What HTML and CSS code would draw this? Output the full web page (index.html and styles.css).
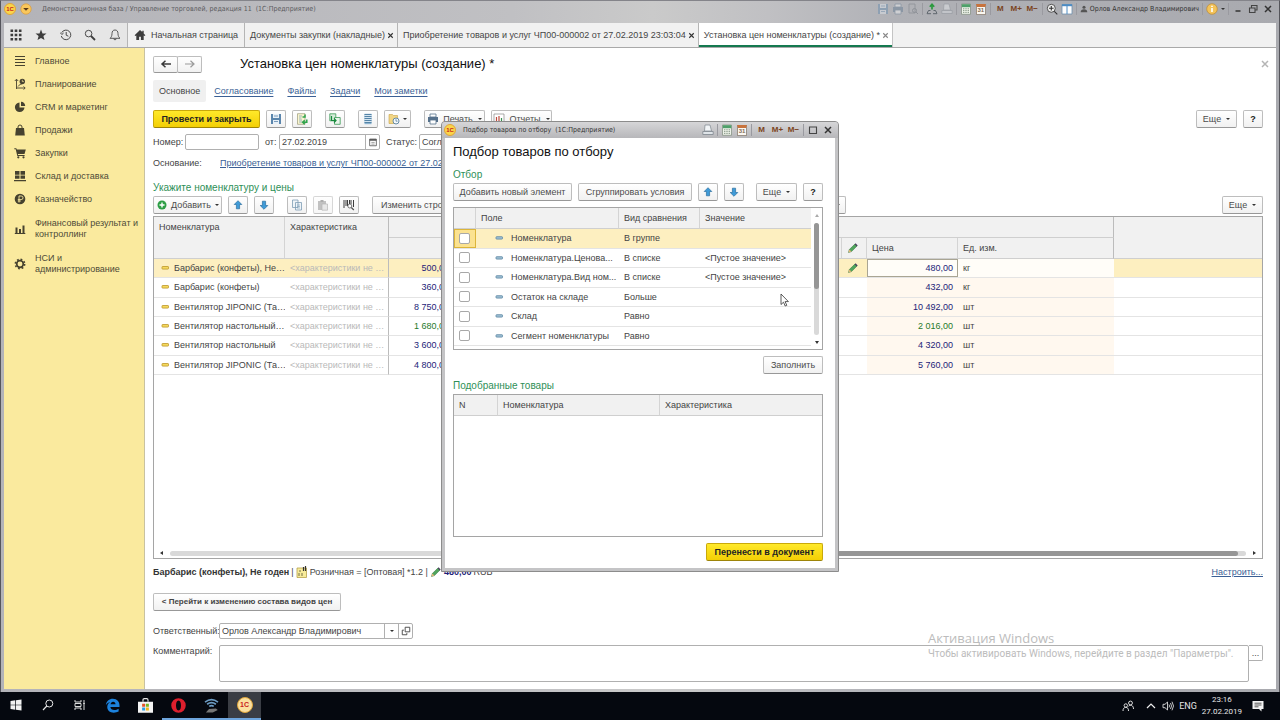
FILE: index.html
```html
<!DOCTYPE html>
<html lang="ru">
<head>
<meta charset="utf-8">
<title>Установка цен номенклатуры (создание)</title>
<link rel="stylesheet" href="styles.css">
</head>
<body>
<svg class="sprite" aria-hidden="true">
  <symbol id="drop" viewBox="0 0 12 12"><circle cx="6" cy="6" r="5.2" fill="#f9c75c" stroke="#d99a3c" stroke-width=".7"/><path d="M3.2 5h5.6L6 7.8z" fill="#5a3a18"/></symbol>
  <symbol id="apps" viewBox="0 0 12 12"><path d="M.5 .5h2.6v2.6H.5zM4.7 .5h2.6v2.6H4.7zM8.9 .5h2.6v2.6H8.9zM.5 4.7h2.6v2.6H.5zM4.7 4.7h2.6v2.6H4.7zM8.9 4.7h2.6v2.6H8.9zM.5 8.9h2.6v2.6H.5zM4.7 8.9h2.6v2.6H4.7zM8.9 8.9h2.6v2.6H8.9z" fill="#3d3d3d"/></symbol>
  <symbol id="star" viewBox="0 0 12 12"><path d="M6 .6l1.5 3.8 4 .2-3.1 2.5 1.1 4L6 8.9l-3.5 2.2 1.1-4L.5 4.6l4-.2z" fill="#3d3d3d"/></symbol>
  <symbol id="history" viewBox="0 0 12 12"><path d="M1.7 3.7A4.8 4.8 0 1 1 1.3 7M.2 3.6l1.6 1.9L3.6 4M6.2 3v3.2l2.2 1" fill="none" stroke="#4a4a4a" stroke-width="1"/></symbol>
  <symbol id="search" viewBox="0 0 12 12"><circle cx="4.6" cy="4.6" r="3.3" fill="none" stroke="#4a4a4a" stroke-width="1"/><path d="M7 7l4 4" stroke="#3d3d3d" stroke-width="1.8"/></symbol>
  <symbol id="bell" viewBox="0 0 12 12"><path d="M6 1c-2 0-3 1.400-3 3.600 0 2.500-.8 3.700-2 4.700h10c-1.200-1-2-2.200-2-4.700C9 2.400 8 1 6 1zM4.800 9.500a1.200 1.300 0 0 0 2.400 0" fill="none" stroke="#4a4a4a" stroke-width=".9"/></symbol>
  <symbol id="home" viewBox="0 0 12 12"><path d="M6 1L.6 6.200l.9.9L2.300 6.400V11h2.800V7.800h1.800V11h2.800V6.400l.8.700.9-.9-1.700-1.700V1.800H8.300v1.300z" fill="#3d3d3d"/></symbol>
  <symbol id="menu" viewBox="0 0 12 12"><path d="M1 1.500h10M1 4.500h10M1 7.500h10M1 10.500h10" stroke="#46422f" stroke-width="1.200"/></symbol>
  <symbol id="plan" viewBox="0 0 12 12"><path d="M2.500 11V1.500M.8 3l1.700-1.800L4.200 3M2.500 10h8.500M9.500 8.500L11.200 10 9.500 11.600M4 8.500L6.500 6l1 1" fill="none" stroke="#46422f" stroke-width=".9"/><circle cx="8.300" cy="3.500" r="2.700" fill="#46422f"/><path d="M8.300 1.800v1.800h1.600" fill="none" stroke="#faea9e" stroke-width=".7"/></symbol>
  <symbol id="pie" viewBox="0 0 12 12"><path d="M5.500 1.500v5h5A4.800 4.800 0 1 1 5.500 1.500z" fill="#46422f"/><path d="M7 .8A4.500 4.500 0 0 1 11.200 5H7z" fill="#46422f"/></symbol>
  <symbol id="bag" viewBox="0 0 12 12"><path d="M2 4h8l.8 7.500H1.200z" fill="#46422f"/><path d="M4 5.500V3a2 2 0 0 1 4 0v2.500" fill="none" stroke="#46422f" stroke-width="1"/></symbol>
  <symbol id="cart" viewBox="0 0 12 12"><path d="M.3 1.200h2l.5 1.300h9L10.500 7H3.800l.3 1h6.500v1H3.300L1.700 2.200H.3z" fill="#46422f"/><circle cx="4.300" cy="10.300" r="1.100" fill="#46422f"/><circle cx="9.500" cy="10.300" r="1.100" fill="#46422f"/></symbol>
  <symbol id="store" viewBox="0 0 12 12"><path d="M1 1h4.500v3.700H1zM6.500 1H11v3.700H6.500zM1 5.500h4.500v3.300H1zM6.500 5.500H11v3.300H6.500zM0 9.900h12v1.300H0z" fill="#46422f"/></symbol>
  <symbol id="ruble" viewBox="0 0 12 12"><circle cx="6" cy="6" r="5.300" fill="#46422f"/><path d="M5 9.500V3h2.200a1.600 1.600 0 0 1 0 3.600H3.800M3.800 8h3" fill="none" stroke="#faea9e" stroke-width=".9"/></symbol>
  <symbol id="bars" viewBox="0 0 12 12"><path d="M1.500 4.500h2V10h-2zM5 6h2v4H5zM8.500 2.500h2V10h-2zM.8 10h10.500v1H.8z" fill="#46422f"/></symbol>
  <symbol id="gear" viewBox="0 0 12 12"><circle cx="6" cy="6" r="3.300" fill="none" stroke="#46422f" stroke-width="1.700"/><circle cx="6" cy="6" r="4.700" fill="none" stroke="#46422f" stroke-width="1.500" stroke-dasharray="1.800 1.891"/></symbol>
  <symbol id="left" viewBox="0 0 12 12"><path d="M11 6H3M5.500 2.800L2 6l3.500 3.200" fill="none" stroke="#3b3b3b" stroke-width="1.500"/></symbol>
  <symbol id="right" viewBox="0 0 12 12"><path d="M1 6h8M6.500 2.800L10 6 6.500 9.200" fill="none" stroke="#9a9a9a" stroke-width="1.200"/></symbol>
  <symbol id="save" viewBox="0 0 12 12"><path d="M1 1h10v10H1z" fill="#5b86ad"/><path d="M3 1h6v4H3zM3 7h6v4H3z" fill="#e8f0f7"/><path d="M4 8.500h4M4 3h4" stroke="#5b86ad" stroke-width=".8"/></symbol>
  <symbol id="post" viewBox="0 0 12 12"><path d="M1.500 .7h7.500v10.600H1.500z" fill="#fbf6cf" stroke="#9a9a7a" stroke-width=".7"/><path d="M3 3h3M3 5h2.500M3 7h3M3 9h4" stroke="#7fa2b5" stroke-width=".8"/><path d="M10.800 6.500v2.700H7.500M9 1.500v2.500H6.500M8.700 7.200l-2 2 2 2" fill="none" stroke="#2fa54c" stroke-width="1.500"/></symbol>
  <symbol id="based" viewBox="0 0 12 12"><path d="M.8 .8h6v7h-6z" fill="#d4ecd8" stroke="#3b9b57" stroke-width=".8"/><path d="M5.500 4.500h5.700v6.800H5.500z" fill="#e9f5ea" stroke="#3b9b57" stroke-width=".8"/><path d="M2.500 3v4.500h4M5 5.500l2 2-2 2" fill="none" stroke="#17893c" stroke-width="1.200"/></symbol>
  <symbol id="list" viewBox="0 0 12 12"><path d="M2.500 .8h7v10.400h-7z" fill="#8db4d0"/><path d="M2.500 1.500h7M2.500 3.500h7M2.500 5.500h7M2.500 7.500h7M2.500 9.500h7" stroke="#4f7fa3" stroke-width=".9"/><path d="M2.500 2.500h7M2.500 4.500h7M2.500 6.500h7M2.500 8.500h7" stroke="#dcebf5" stroke-width=".9"/></symbol>
  <symbol id="clock" viewBox="0 0 12 12"><path d="M1 1.500h3.500l1 1H9.500v8H1z" fill="#f2d685" stroke="#c8a247" stroke-width=".6"/><circle cx="8" cy="8" r="3" fill="#f5f9fc" stroke="#56809f" stroke-width=".9"/><path d="M8 6.200V8.200h1.500" fill="none" stroke="#56809f" stroke-width=".8"/></symbol>
  <symbol id="print" viewBox="0 0 12 12"><path d="M3 1h6v3H3z" fill="#fff" stroke="#56718c" stroke-width=".8"/><path d="M1 4h10v5H1z" fill="#56718c"/><path d="M3 7h6v4H3z" fill="#fff" stroke="#56718c" stroke-width=".8"/></symbol>
  <symbol id="report" viewBox="0 0 12 12"><path d="M1 1h10v10H1z" fill="#fff" stroke="#888" stroke-width=".7"/><path d="M3.500 9V4M6 9V3" stroke="#bd4a3c" stroke-width="1.200"/><path d="M8.500 9V5" stroke="#38914f" stroke-width="1.200"/></symbol>
  <symbol id="plus" viewBox="0 0 12 12"><circle cx="6" cy="6" r="4.500" fill="#2e9e46"/><path d="M6 3.500v5M3.500 6h5" stroke="#fff" stroke-width="1.400"/></symbol>
  <symbol id="up" viewBox="0 0 12 12"><path d="M6 1.700l3.800 3.800H7.600v4.300H4.400V5.500H2.200z" fill="#3f9bd8" stroke="#2b6f9f" stroke-width=".7"/></symbol>
  <symbol id="down" viewBox="0 0 12 12"><path d="M6 10.300L2.200 6.500h2.200V2.200h3.200v4.300h2.200z" fill="#3f9bd8" stroke="#2b6f9f" stroke-width=".7"/></symbol>
  <symbol id="copy" viewBox="0 0 12 12"><path d="M1.500 1h5.500v7.500H1.500zM4.500 3.500h6v7.500h-6z" fill="#eef4f8" stroke="#7e9db5" stroke-width=".8"/><path d="M6 6h3M6 7.500h3M6 9h3" stroke="#7e9db5" stroke-width=".6"/></symbol>
  <symbol id="paste" viewBox="0 0 12 12"><path d="M1 2h8v9H1z" fill="#999"/><path d="M3.500 1h3v2h-3z" fill="#777"/><path d="M5 5h5.500v6.200H5z" fill="#d8d8d8" stroke="#888" stroke-width=".7"/></symbol>
  <symbol id="barcode" viewBox="0 0 12 12"><path d="M1 1v8M3 1v6M4.500 1v6M6.500 1v4M8 1v4M10.500 1v7" stroke="#3d3d3d" stroke-width="1"/><circle cx="6.800" cy="7" r="2" fill="#fff" stroke="#555" stroke-width=".8"/><path d="M8.300 8.500l2.500 2.500" stroke="#555" stroke-width="1.200"/></symbol>
  <symbol id="calendar" viewBox="0 0 12 12"><path d="M2 2.500h8v8H2z" fill="none" stroke="#555" stroke-width="1"/><path d="M2 2.500h8v2H2z" fill="#555"/><path d="M4 6.500h4M4 8.500h4" stroke="#777" stroke-width=".8"/></symbol>
  <symbol id="gold" viewBox="0 0 12 12"><rect x="3" y="4.500" width="6.500" height="2.600" rx=".6" fill="#f5d95e" stroke="#bd9628" stroke-width=".8"/></symbol>
  <symbol id="blue" viewBox="0 0 12 12"><rect x="3" y="4.700" width="6.500" height="2.400" rx=".6" fill="#9fc0d4" stroke="#5c87a3" stroke-width=".8"/></symbol>
  <symbol id="pencil" viewBox="0 0 12 12"><path d="M1.500 10.500l.8-3L8 2l2 2-5.500 5.600z" fill="#4fa55c" stroke="#2c6e38" stroke-width=".5"/><path d="M1.500 10.500l.8-3 2.200 2.100z" fill="#e5b777"/><path d="M7.600 2.300l1-1 2.100 2.100-1 1z" fill="#48405c"/></symbol>
  <symbol id="calc" viewBox="0 0 12 12"><path d="M1.500 1h9v10.300h-9z" fill="#eef3e9" stroke="#7e8b7c" stroke-width=".7"/><path d="M1.800 1.200h8.500v3H1.800z" fill="#4fa06a"/><path d="M3 5.800h6M3 7.600h6M3 9.400h6" stroke="#8a9a8a" stroke-width="1" stroke-dasharray="1.400 .9"/></symbol>
  <symbol id="preview" viewBox="0 0 12 12"><path d="M2 1h6v9H2z" fill="none" stroke="#5d656d" stroke-width=".8"/><circle cx="7.500" cy="7.500" r="2" fill="none" stroke="#5d656d"/><path d="M9 9l2 2" stroke="#5d656d"/></symbol>
  <symbol id="faded" viewBox="0 0 12 12"><path d="M3 1h5l1.500 6h-7z" fill="#f2f5f7" stroke="#7d858d" stroke-width=".7"/><path d="M.8 7.500h10.400v3H.8z" fill="#dfe4e8" stroke="#7d858d" stroke-width=".8"/></symbol>
  <symbol id="addlink" viewBox="0 0 12 12"><path d="M6 6.500V1.800M3.800 3.700L6 1.300l2.200 2.400" fill="none" stroke="#2c9a3f" stroke-width="1.700"/><path d="M1 10.500l1.500-3h2M11 10.500l-1.500-3h-2M1 10.700h4M7 10.700h4" fill="none" stroke="#5f676e" stroke-width="1"/></symbol>
  <symbol id="zoomin" viewBox="0 0 12 12"><circle cx="5.300" cy="5.300" r="4" fill="#eee" stroke="#444" stroke-width=".9"/><path d="M5.300 3v4.600M3 5.300h4.600M8.300 8.300l3 3" stroke="#333" stroke-width="1.100"/></symbol>
  <symbol id="panes" viewBox="0 0 12 12"><path d="M1 1.500h10v9.500H1z" fill="#fdfdfd" stroke="#6c8fae" stroke-width=".8"/><path d="M1 1.200h10v2H1z" fill="#4d8cc4"/><path d="M6 2v9" stroke="#4d8cc4"/></symbol>
  <symbol id="user" viewBox="0 0 12 12"><circle cx="6" cy="3.500" r="2.300" fill="#555"/><path d="M1 11c0-3 2-4.500 5-4.500s5 1.500 5 4.500z" fill="#555"/></symbol>
  <symbol id="info" viewBox="0 0 12 12"><circle cx="6" cy="6" r="5.300" fill="#f3c35a" stroke="#bd8a32" stroke-width=".7"/><path d="M6 5v4M6 2.700v1.300" stroke="#fff" stroke-width="1.600"/></symbol>
  <symbol id="min" viewBox="0 0 12 12"><path d="M3.500 8h5" stroke="#333" stroke-width="1.500"/></symbol>
  <symbol id="max" viewBox="0 0 12 12"><path d="M2.500 3h7v6.500h-7z" fill="none" stroke="#444" stroke-width="1.100"/></symbol>
  <symbol id="restore" viewBox="0 0 12 12"><path d="M2.500 5h5.500v4.500H2.500zM4.500 4.500V2.500h5.500V7H8.500" fill="none" stroke="#444" stroke-width="1.100"/></symbol>
  <symbol id="cross" viewBox="0 0 12 12"><path d="M3 3l6 6M9 3l-6 6" stroke="currentColor" stroke-width="1.500"/></symbol>
  <symbol id="open" viewBox="0 0 12 12"><path d="M5 1.500h5.500V7H5zM3.500 5H1.500v5.500H7V8.500" fill="none" stroke="#444" stroke-width="1.100"/></symbol>
  <symbol id="price" viewBox="0 0 12 12"><path d="M1 2h9.500v9.500H1z" fill="#f7eb9a" stroke="#b7a24a" stroke-width=".8"/><path d="M3 5h2M3 7v3M6 7v3" stroke="#777144" stroke-width="1"/><path d="M7.500 5V1M9.500 5V0" stroke="#333" stroke-width="1.200"/></symbol>
  <symbol id="win" viewBox="0 0 12 12"><path d="M.5 2l4.800-.7v4.400H.5zM6 1.200L11.500.4v5.300H6zM.5 6.300h4.800v4.400L.5 10zM6 6.300h5.500v5.300L6 10.800z" fill="#f2f2f2"/></symbol>
  <symbol id="find" viewBox="0 0 12 12"><circle cx="7.300" cy="4.500" r="3.500" fill="none" stroke="#e8e8e8" stroke-width="1"/><path d="M4.800 7L1 11" stroke="#e8e8e8" stroke-width="1.100"/></symbol>
  <symbol id="tasks" viewBox="0 0 12 12"><path d="M1 1v2h6V1M1 11V9h6v2M1 4.500h6v3H1zM10 1v10M9.200 4.500h1.600" fill="none" stroke="#dcdcdc" stroke-width="1"/></symbol>
  <symbol id="edge" viewBox="0 0 12 12"><path d="M.7 5.600C1 2.600 3.300.5 6.300.5c3.400 0 5.300 2.400 5.300 5.300v1.300H4.300c.1 1.600 1.400 2.400 3.100 2.400 1.300 0 2.500-.4 3.500-1v2.300c-1.100.6-2.400.9-3.900.9-3.100 0-5.200-1.700-5.200-4.500 0-1.700.9-3.200 2.400-4C2.700 3.600 1.500 4.300.7 5.600zM4.400 5h4c0-1.300-.7-2-1.900-2-1.100 0-1.800.7-2.100 2z" fill="#1c82dd"/></symbol>
  <symbol id="shop" viewBox="0 0 12 12"><path d="M0 3h12v8.800H0z" fill="#f4f4f4"/><path d="M4 3V1.500Q4 .5 5 .5h2q1 0 1 1V3" fill="none" stroke="#e8e8e8" stroke-width=".9"/><path d="M3.300 4.600h2.400V7H3.300z" fill="#e3532a"/><path d="M6.300 4.600h2.400V7H6.300z" fill="#78b421"/><path d="M3.300 7.600h2.400V10H3.300z" fill="#2a9de3"/><path d="M6.300 7.600h2.400V10H6.300z" fill="#f1b51c"/></symbol>
  <symbol id="opera" viewBox="0 0 12 12"><path fill-rule="evenodd" d="M6 .2a5.800 5.800 0 1 1 0 11.600A5.800 5.800 0 0 1 6 .2zM6 2C4.600 2 4 4 4 6s.6 4 2 4 2-2 2-4-.6-4-2-4z" fill="#dd1f2d"/></symbol>
  <symbol id="wifi" viewBox="0 0 12 12"><path d="M.8 3.300Q6-.8 11.200 3.300M2.500 5Q6 2.300 9.500 5M4.200 6.700Q6 5.400 7.800 6.700" fill="none" stroke="#6c9cc4" stroke-width="1.300"/><path d="M1.500 11.500L4 8.800l5.500-.5 1.500 1.200-4 2z" fill="#777"/></symbol>
  <symbol id="people" viewBox="0 0 12 12"><circle cx="8.500" cy="3" r="1.900" fill="none" stroke="#ddd"/><circle cx="3.800" cy="5.500" r="1.700" fill="none" stroke="#ddd"/><path d="M1 11c0-2.500 1-3.600 2.800-3.600S6.500 8.500 6.500 11M6.500 6.200c2-2 5-.8 5 2.800" fill="none" stroke="#ddd"/></symbol>
  <symbol id="chev" viewBox="0 0 12 12"><path d="M2 8l4-4 4 4" fill="none" stroke="#eee" stroke-width="1.200"/></symbol>
  <symbol id="sound" viewBox="0 0 12 12"><path d="M1 4.300h2L5.500 2v8L3 7.700H1zM7 4.500q1 1.500 0 3M8.500 3q2 3 0 6M10 1.700q3 4.300 0 8.600" fill="none" stroke="#ddd" stroke-width=".9"/></symbol>
  <symbol id="note" viewBox="0 0 12 12"><path d="M.5 1h11v8H9.500v2.500L7 9H.5z" fill="#f2f2f2"/><path d="M2.500 3.200h7M2.500 5h7M2.500 6.800h4" stroke="#333" stroke-width=".8"/></symbol>
</svg>

<div class="window">
  <header class="titlebar">
    <span class="logo">1С</span>
    <svg class="ic drop"><use href="#drop"/></svg>
    <span class="caption">Демонстрационная база / Управление торговлей, редакция 11&nbsp; (1С:Предприятие)</span>
    <div class="tools">
      <svg class="ic dim"><use href="#save"/></svg><svg class="ic dim"><use href="#print"/></svg><svg class="ic dim"><use href="#preview"/></svg>
      <i class="sep"></i><svg class="ic"><use href="#addlink"/></svg><svg class="ic dim"><use href="#faded"/></svg>
      <i class="sep"></i><svg class="ic"><use href="#calc"/></svg><span class="cal">31</span>
      <i class="sep"></i><b class="mem">M</b><b class="mem">M+</b><b class="mem">M−</b>
      <i class="sep"></i><svg class="ic"><use href="#zoomin"/></svg><svg class="ic"><use href="#panes"/></svg>
      <i class="sep"></i><span class="username"><svg class="ic small"><use href="#user"/></svg>Орлов Александр Владимирович</span>
      <i class="sep"></i><svg class="ic"><use href="#info"/></svg><i class="caret"></i>
      <i class="sep"></i><svg class="ic"><use href="#min"/></svg><svg class="ic"><use href="#restore"/></svg><svg class="ic dark"><use href="#cross"/></svg>
    </div>
  </header>

  <nav class="tabbar">
    <div class="quick">
      <svg class="ic"><use href="#apps"/></svg><svg class="ic"><use href="#star"/></svg><svg class="ic"><use href="#history"/></svg><svg class="ic"><use href="#search"/></svg><svg class="ic"><use href="#bell"/></svg>
    </div>
    <a class="tab home" href="#"><svg class="ic"><use href="#home"/></svg>Начальная страница</a>
    <a class="tab" href="#">Документы закупки (накладные)<svg class="ic x"><use href="#cross"/></svg></a>
    <a class="tab" href="#">Приобретение товаров и услуг ЧП00-000002 от 27.02.2019 23:03:04<svg class="ic x"><use href="#cross"/></svg></a>
    <a class="tab active" href="#">Установка цен номенклатуры (создание) *<svg class="ic x"><use href="#cross"/></svg></a>
  </nav>

  <div class="body">
    <aside class="sidebar">
      <a href="#"><svg class="ic"><use href="#menu"/></svg>Главное</a>
      <a href="#"><svg class="ic"><use href="#plan"/></svg>Планирование</a>
      <a href="#"><svg class="ic"><use href="#pie"/></svg>CRM и маркетинг</a>
      <a href="#"><svg class="ic"><use href="#bag"/></svg>Продажи</a>
      <a href="#"><svg class="ic"><use href="#cart"/></svg>Закупки</a>
      <a href="#"><svg class="ic"><use href="#store"/></svg>Склад и доставка</a>
      <a href="#"><svg class="ic"><use href="#ruble"/></svg>Казначейство</a>
      <a class="two" href="#"><svg class="ic"><use href="#bars"/></svg><span>Финансовый результат и<br>контроллинг</span></a>
      <a class="two" href="#"><svg class="ic"><use href="#gear"/></svg><span>НСИ и<br>администрирование</span></a>
    </aside>

    <main class="page">
      <div class="row head">
        <div class="pair"><button class="btn" aria-label="Назад"><svg class="ic"><use href="#left"/></svg></button><button class="btn" aria-label="Вперед"><svg class="ic"><use href="#right"/></svg></button></div>
        <h1>Установка цен номенклатуры (создание) *</h1>
        <svg class="ic pale push"><use href="#cross"/></svg>
      </div>
      <div class="row sections">
        <span class="current">Основное</span>
        <a href="#">Согласование</a><a href="#">Файлы</a><a href="#">Задачи</a><a href="#">Мои заметки</a>
      </div>
      <div class="row commands">
        <button class="btn primary">Провести и закрыть</button>
        <button class="btn sq" aria-label="Записать"><svg class="ic"><use href="#save"/></svg></button>
        <button class="btn sq" aria-label="Провести"><svg class="ic"><use href="#post"/></svg></button>
        <button class="btn sq gapl" aria-label="Создать на основании"><svg class="ic"><use href="#based"/></svg></button>
        <button class="btn sq gapl" aria-label="Список"><svg class="ic"><use href="#list"/></svg></button>
        <button class="btn wide" aria-label="Файлы"><svg class="ic"><use href="#clock"/></svg><i class="caret"></i></button>
        <button class="btn menu gapl"><svg class="ic"><use href="#print"/></svg>Печать<i class="caret"></i></button>
        <button class="btn menu"><svg class="ic"><use href="#report"/></svg>Отчеты<i class="caret"></i></button>
        <button class="btn more push">Еще<i class="caret"></i></button>
        <button class="btn sq help">?</button>
      </div>
      <div class="row fields">
        <label for="num">Номер:</label><input id="num" class="box num" type="text">
        <label for="date" class="from">от:</label>
        <span class="group"><input id="date" class="date" type="text" value="27.02.2019"><button class="mini" aria-label="Календарь"><svg class="ic"><use href="#calendar"/></svg></button></span>
        <label for="status" class="st">Статус:</label><select id="status" class="box status"><option>Согласован</option></select>
      </div>
      <div class="row basis"><span>Основание:</span><a href="#">Приобретение товаров и услуг ЧП00-000002 от 27.02.2019 23:03:04</a></div>
      <h2>Укажите номенклатуру и цены</h2>
      <div class="row commands list">
        <button class="btn add"><svg class="ic"><use href="#plus"/></svg>Добавить<i class="caret"></i></button>
        <button class="btn sq" aria-label="Вверх"><svg class="ic"><use href="#up"/></svg></button>
        <button class="btn sq" aria-label="Вниз"><svg class="ic"><use href="#down"/></svg></button>
        <button class="btn sq gapl" aria-label="Скопировать"><svg class="ic"><use href="#copy"/></svg></button>
        <button class="btn sq faint" aria-label="Вставить"><svg class="ic"><use href="#paste"/></svg></button>
        <button class="btn sq" aria-label="Штрихкод"><svg class="ic"><use href="#barcode"/></svg></button>
        <button class="btn change gapl">Изменить строки<i class="caret"></i></button>
        <button class="btn more push">Еще<i class="caret"></i></button>
      </div>

      <div class="grid">
        <table class="prices">
          <colgroup><col class="c1"><col class="c2"><col class="c3"><col class="c4"><col class="c5"><col class="c6"><col class="c7"><col></colgroup>
          <thead>
            <tr><th rowspan="2">Номенклатура</th><th rowspan="2" class="vline">Характеристика</th><th colspan="5" class="vline"></th><th rowspan="2"></th></tr>
            <tr><th></th><th></th><th class="mid"><svg class="ic"><use href="#pencil"/></svg></th><th>Цена</th><th class="vline">Ед. изм.</th></tr>
          </thead>
          <tbody>
            <tr class="sel"><td><svg class="ic"><use href="#gold"/></svg>Барбарис (конфеты), Не…</td><td class="ghost vline">&lt;характеристики не …</td><td class="n">500,00</td><td></td><td class="mid"><svg class="ic"><use href="#pencil"/></svg></td><td class="n edit">480,00</td><td class="unit">кг</td><td></td></tr>
            <tr><td><svg class="ic"><use href="#gold"/></svg>Барбарис (конфеты)</td><td class="ghost vline">&lt;характеристики не …</td><td class="n">360,00</td><td></td><td></td><td class="n warm">432,00</td><td class="warm">кг</td><td></td></tr>
            <tr><td><svg class="ic"><use href="#gold"/></svg>Вентилятор JIPONIC (Та…</td><td class="ghost vline">&lt;характеристики не …</td><td class="n">8 750,00</td><td></td><td></td><td class="n warm">10 492,00</td><td class="warm">шт</td><td></td></tr>
            <tr><td><svg class="ic"><use href="#gold"/></svg>Вентилятор настольный…</td><td class="ghost vline">&lt;характеристики не …</td><td class="n green">1 680,00</td><td></td><td></td><td class="n warm green">2 016,00</td><td class="warm">шт</td><td></td></tr>
            <tr><td><svg class="ic"><use href="#gold"/></svg>Вентилятор настольный</td><td class="ghost vline">&lt;характеристики не …</td><td class="n">3 600,00</td><td></td><td></td><td class="n warm">4 320,00</td><td class="warm">шт</td><td></td></tr>
            <tr><td><svg class="ic"><use href="#gold"/></svg>Вентилятор JIPONIC (Та…</td><td class="ghost vline">&lt;характеристики не …</td><td class="n">4 800,00</td><td></td><td></td><td class="n warm">5 760,00</td><td class="warm">шт</td><td></td></tr>
          </tbody>
        </table>
        <div class="hscroll"><i class="arrow l"></i><div class="track"><div class="thumb"></div></div><i class="arrow r"></i></div>
      </div>

      <div class="row info"><b>Барбарис (конфеты), Не годен</b> <span>|</span> <svg class="ic"><use href="#price"/></svg> <span>Розничная = [Оптовая] *1.2 |</span> <svg class="ic"><use href="#pencil"/></svg><b class="sum">480,00</b> <span>RUB</span><a class="push" href="#">Настроить...</a></div>
      <div class="row"><button class="btn goto">&lt; Перейти к изменению состава видов цен</button></div>
      <div class="row person"><label for="resp">Ответственный:</label><span class="group"><input id="resp" class="resp" type="text" value="Орлов Александр Владимирович"><button class="mini" aria-label="Выбрать"><i class="caret"></i></button><button class="mini" aria-label="Открыть"><svg class="ic"><use href="#open"/></svg></button></span></div>
      <div class="row comment"><label for="comm">Комментарий:</label><textarea id="comm" class="box"></textarea><button class="dots">...</button></div>
    </main>
  </div>

  <section class="dialog" role="dialog" aria-labelledby="dlg">
    <header class="dlgbar">
      <span class="logo">1С</span><span class="dlgcap">Подбор товаров по отбору&nbsp; (1С:Предприятие)</span>
      <div class="tools">
        <svg class="ic"><use href="#faded"/></svg><i class="sep"></i><svg class="ic"><use href="#calc"/></svg><span class="cal">31</span><i class="sep"></i><b class="mem">M</b><b class="mem">M+</b><b class="mem">M−</b><i class="sep"></i><svg class="ic"><use href="#max"/></svg><svg class="ic dark"><use href="#cross"/></svg>
      </div>
    </header>
    <div class="dlgbody">
      <h1 id="dlg">Подбор товаров по отбору</h1>
      <h2>Отбор</h2>
      <div class="row commands">
        <button class="btn newel">Добавить новый элемент</button>
        <button class="btn group-c">Сгруппировать условия</button>
        <button class="btn sq" aria-label="Вверх"><svg class="ic"><use href="#up"/></svg></button>
        <button class="btn sq" aria-label="Вниз"><svg class="ic"><use href="#down"/></svg></button>
        <button class="btn more push">Еще<i class="caret"></i></button>
        <button class="btn sq help">?</button>
      </div>
      <div class="grid filter">
        <table>
          <colgroup><col class="f1"><col class="f2"><col class="f3"><col></colgroup>
          <thead><tr><th></th><th>Поле</th><th>Вид сравнения</th><th>Значение</th></tr></thead>
          <tbody>
            <tr class="sel"><td class="chk on"><input type="checkbox" aria-label="Номенклатура"></td><td><svg class="ic"><use href="#blue"/></svg>Номенклатура</td><td>В группе</td><td></td></tr>
            <tr><td class="chk"><input type="checkbox" aria-label="Ценовая группа"></td><td><svg class="ic"><use href="#blue"/></svg>Номенклатура.Ценова...</td><td>В списке</td><td>&lt;Пустое значение&gt;</td></tr>
            <tr><td class="chk"><input type="checkbox" aria-label="Вид номенклатуры"></td><td><svg class="ic"><use href="#blue"/></svg>Номенклатура.Вид ном...</td><td>В списке</td><td>&lt;Пустое значение&gt;</td></tr>
            <tr><td class="chk"><input type="checkbox" aria-label="Остаток на складе"></td><td><svg class="ic"><use href="#blue"/></svg>Остаток на складе</td><td>Больше</td><td></td></tr>
            <tr><td class="chk"><input type="checkbox" aria-label="Склад"></td><td><svg class="ic"><use href="#blue"/></svg>Склад</td><td>Равно</td><td></td></tr>
            <tr><td class="chk"><input type="checkbox" aria-label="Сегмент номенклатуры"></td><td><svg class="ic"><use href="#blue"/></svg>Сегмент номенклатуры</td><td>Равно</td><td></td></tr>
            <tr><td class="chk"><input type="checkbox" aria-label="Следующее условие"></td><td></td><td></td><td></td></tr>
          </tbody>
        </table>
        <div class="vscroll"><i class="arrow u"></i><div class="track"><div class="thumb"></div></div><i class="arrow d"></i></div>
      </div>
      <div class="row end"><button class="btn fill">Заполнить</button></div>
      <h2>Подобранные товары</h2>
      <div class="grid picked">
        <table>
          <colgroup><col class="p1"><col class="p2"><col></colgroup>
          <thead><tr><th>N</th><th>Номенклатура</th><th>Характеристика</th></tr></thead>
        </table>
      </div>
      <div class="row end"><button class="btn primary move">Перенести в документ</button></div>
    </div>
  </section>

  <div class="watermark"><p>Активация Windows</p><small>Чтобы активировать Windows, перейдите в раздел "Параметры".</small></div>
  <svg class="cursor" viewBox="0 0 9 14"><path d="M1 1v10.500l2.500-2.300 1.700 3.800 1.600-.7-1.700-3.700h3.300z" fill="#fff" stroke="#333" stroke-width=".8"/></svg>
</div>

<footer class="taskbar">
  <button aria-label="Пуск"><svg class="ic"><use href="#win"/></svg></button>
  <button aria-label="Поиск"><svg class="ic"><use href="#find"/></svg></button>
  <button aria-label="Представление задач"><svg class="ic"><use href="#tasks"/></svg></button>
  <button class="app" aria-label="Edge"><svg class="ic big"><use href="#edge"/></svg></button>
  <button class="app" aria-label="Магазин"><svg class="ic big"><use href="#shop"/></svg></button>
  <button class="app run" aria-label="Opera"><svg class="ic big"><use href="#opera"/></svg></button>
  <button class="app run" aria-label="Сеть"><svg class="ic big"><use href="#wifi"/></svg></button>
  <button class="app run cur" aria-label="1С:Предприятие"><span class="logo large">1С</span></button>
  <div class="tray">
    <svg class="ic people"><use href="#people"/></svg><svg class="ic"><use href="#chev"/></svg><svg class="ic"><use href="#sound"/></svg><span>ENG</span><time>23:16<br>27.02.2019</time><svg class="ic note"><use href="#note"/></svg>
  </div>
</footer>
</body>
</html>
```

FILE: styles.css
```css
* { box-sizing: border-box; }
body {
  margin: 0;
  height: 100vh;
  display: flex;
  flex-direction: column;
  overflow: hidden;
  font: 9px/12px "Liberation Sans", Arial, sans-serif;
  color: #444;
  background: #05080f;
}
.sprite { position: absolute; width: 0; height: 0; }
.ic { width: 12px; height: 12px; flex: none; display: block; }
h1, h2, p { margin: 0; font-weight: normal; }
button, input, select, textarea { font: inherit; color: inherit; margin: 0; }
a { color: #3a5f95; }
.push { margin-left: auto; }
.caret { border: 2px solid transparent; border-top-color: #333; border-bottom: 0; width: 4px; height: 2px; flex: none; }
.logo {
  width: 12px;
  height: 12px;
  flex: none;
  border: 1px solid #e0a63a;
  border-radius: 50%;
  background: #fbd54a;
  color: #c8201c;
  font: bold 6px/10px "Liberation Sans", Arial, sans-serif;
  text-align: center;
}
.large { width: 16px; height: 16px; font-size: 7px; line-height: 14px; background: #fbe0a0; }
.cal {
  width: 10px;
  height: 11px;
  margin: 0 1px;
  flex: none;
  border: 1px solid #9b9188;
  border-top: 3px solid #c8733d;
  background: #fbf7f0;
  color: #806c58;
  font: bold 6px/7px "Liberation Sans", Arial, sans-serif;
  text-align: center;
}

/* window frame */
.window {
  position: relative;
  flex: 1;
  min-height: 0;
  display: flex;
  flex-direction: column;
  padding: 0 3px 3px;
  border: 1px solid #55555b;
  border-top-color: #84848a;
  border-bottom: 0;
  background: linear-gradient(90deg, #b3b3b8, #c0c0c3 40%, #cacaca 51%, #c0c0c3 60%, #b0b1b6 70%, #a9aaaf);
}
.titlebar, .dlgbar { font-family: "DejaVu Sans Condensed", "DejaVu Sans", sans-serif; font-size: 7px; }
.titlebar { height: 22px; padding: 0 2px 6px 0; display: flex; align-items: center; }
.drop { margin-left: 4px; }
.caption { margin-left: 10px; color: #5a5a5e; white-space: nowrap; }
.tools { margin-left: auto; display: flex; align-items: center; gap: 3px; }
.dim { opacity: .4; }
.sep { width: 1px; height: 12px; background: #9a9aa0; }
.mem { color: #7b4320; width: 13px; text-align: center; font-family: "Liberation Sans", Arial, sans-serif; font-size: 8px; }
.username { display: flex; align-items: center; gap: 2px; color: #333; white-space: nowrap; }
.small { width: 8px; height: 8px; }
.dark { color: #333; }
.pale { color: #b5b5b5; }

/* tabs */
.tabbar { height: 25px; display: flex; background: #f1f1f1; border-bottom: 1px solid #a9a9a9; }
.quick { width: 123px; background: #e6e6e6; display: flex; align-items: center; justify-content: space-between; padding: 0 6px; }
.tab { display: flex; align-items: center; gap: 1px; padding: 0 2px 0 5px; border-left: 1px solid #b5b5b5; color: #454545; text-decoration: none; white-space: nowrap; }
.home { gap: 5px; padding: 0 6px; }
.x { width: 9px; height: 9px; color: #333; }
.active { background: #fff; border-right: 1px solid #c4c4c4; box-shadow: inset 0 -2px #14794f; }
.active .x { color: #888; }

/* sections */
.body { flex: 1; min-height: 0; display: flex; background: #fff; }
.sidebar { width: 141px; background: #faea9e; border-right: 1px solid #c9c2a0; padding-top: 7px; display: flex; flex-direction: column; gap: 11px; }
.sidebar a { display: flex; align-items: center; gap: 9px; padding-left: 10px; color: #4e4a38; text-decoration: none; white-space: nowrap; line-height: 11px; }
.sidebar .two { margin-top: 2px; }

.page { flex: 1; min-width: 0; padding: 6px 13px 0 8px; display: flex; flex-direction: column; }
.row { display: flex; align-items: center; flex: none; }
.head { height: 20px; margin-right: -8px; }
h1 { font-size: 13px; line-height: 18px; color: #111; }
.head h1 { margin-left: 38px; }
.pair { display: flex; }
.pair .btn { width: 25px; height: 17px; }
.pair .btn + .btn { margin-left: -1px; }
.sections { height: 22px; margin-top: 6px; gap: 14px; }
.current { background: #f0f0f0; padding: 5px 6px; margin-right: -6px; border-radius: 2px; }
.sections a { text-underline-offset: 2px; }

.btn {
  height: 18px;
  padding: 0;
  display: flex;
  align-items: center;
  justify-content: center;
  border: 1px solid #bdbdbd;
  border-bottom-color: #989898;
  border-radius: 2px;
  background: linear-gradient(#fff, #f1f1f1);
  color: #4c4c4c;
  white-space: nowrap;
}
.btn .caret { margin-left: 5px; }
.commands { gap: 6px; }
.page > .commands { margin-top: 8px; }
.sq { width: 20px; }
.gapl { margin-left: 7px; }
.wide { width: 27px; }
.wide .caret { margin-left: 3px; }
.menu { width: 61px; gap: 4px; }
.menu .caret { margin-left: 1px; }
.more { width: 41px; }
.help { font-weight: bold; color: #222; }
.primary { width: 107px; font-weight: bold; color: #222; background: linear-gradient(#ffe92a, #f3cf05); border-color: #c9a90a; border-bottom-color: #9d8408; }
.faint { opacity: .6; }

.box, .group { border: 1px solid #b0b0b0; border-radius: 2px; background: #fff; height: 16px; }
.fields { margin-top: 6px; height: 16px; }
.fields > label:first-child { width: 32px; }
.num { width: 74px; }
.from { width: 20px; padding-left: 6px; }
.group { display: flex; }
.group input { border: 0; padding: 0 2px; background: none; min-width: 0; }
.date { width: 85px; }
.mini { width: 14px; padding: 0; border: 0; border-left: 1px solid #b0b0b0; background: none; display: flex; align-items: center; justify-content: center; }
.mini .ic { width: 10px; height: 10px; }
.st { width: 39px; padding-left: 6px; }
.status { width: 120px; padding: 0 2px; appearance: none; }
.basis { margin-top: 7px; }
.basis span { width: 67px; }
h2 { font-size: 10px; line-height: 14px; color: #2e8f57; }
.page > h2 { margin-top: 12px; }
.page > .list { margin-top: 1px; }
.add { width: 69px; gap: 3px; }
.add .caret { margin-left: 1px; }
.change { width: 474px; justify-content: space-between; padding: 0 5px 0 8px; }

/* tables */
.grid { border: 1px solid #a5a5a5; position: relative; background: #fff; }
.page > .grid { flex: 1; min-height: 120px; margin-top: 2px; display: flex; flex-direction: column; justify-content: space-between; }
table { width: 100%; table-layout: fixed; border-collapse: separate; border-spacing: 0; }
th { font-weight: normal; text-align: left; background: #f1f1f1; padding: 0 5px; border-right: 1px solid #d4d4d4; border-bottom: 1px solid #cfcfcf; }
th:last-child { border-right: 0; }
td { padding: 0 5px; border-bottom: 1px solid #e4e4e4; white-space: nowrap; overflow: hidden; }
td .ic { display: inline-block; vertical-align: -3px; margin-right: 3px; }
.prices td:first-child { padding-right: 0; }
.prices thead tr { height: 21px; }
.prices th[rowspan] { vertical-align: top; padding-top: 4px; }
.prices tbody { height: 116px; }
.prices th.vline, .prices td.vline { border-right: 1px solid #bcbcbc; }
.prices td.ghost { color: #b9b9b9; }
.c1 { width: 131px; } .c2 { width: 104px; } .c3 { width: 65px; } .c4 { width: 388px; }
.c5 { width: 25px; } .c6 { width: 91px; } .c7 { width: 156px; }
.n { text-align: right; color: #1d1d78; }
td.green { color: #1f7a2c; }
.sel td { background: #fdefc0; }
.sel td.unit { background: #fffdf8; }
.sel td.edit { background: #fffdf8; box-shadow: inset 0 0 0 1px #a9a593; }
td.warm { background: #fff8ef; }
.mid .ic { margin: 0; }
.arrow { width: 0; height: 0; border: 2px solid transparent; flex: none; }
.l { border-right: 3px solid #333; border-left: 0; }
.r { border-left: 3px solid #333; border-right: 0; }
.u { border-bottom: 3px solid #aaa; border-top: 0; }
.d { border-top: 3px solid #333; border-bottom: 0; }
.hscroll { display: flex; align-items: center; padding: 0 6px; gap: 7px; height: 10px; }
.track { background: #d9d9d9; border-radius: 3px; flex: 1; }
.hscroll .track { height: 5px; display: flex; justify-content: flex-end; padding-right: 8px; }
.hscroll .thumb { width: 64%; height: 5px; }
.thumb { background: #969696; border-radius: 3px; }

.info { margin-top: 5px; height: 16px; gap: 2px; white-space: nowrap; }
.info b { color: #333; }
.info .sum { color: #1d1d78; }
.goto { width: 188px; margin-top: 13px; font-weight: bold; color: #444; font-size: 8px; }
.person { margin-top: 12px; }
.person label, .comment label { width: 66px; }
.resp { width: 164px; }
.comment { margin: 6px 0 7px; align-items: flex-start; }
.comment textarea { flex: 1; height: 37px; resize: none; }
.dots { width: 14px; height: 16px; padding: 0; border: 1px solid #b0b0b0; border-left: 0; border-radius: 0 2px 2px 0; background: #fff; }

/* dialog */
.dialog { position: absolute; left: 440px; top: 120px; width: 398px; border: 1px solid #8c8c8c; border-radius: 4px 4px 0 0; background: #c4c4c6; padding: 0 3px 3px; }
.dlgbar { height: 16px; display: flex; align-items: center; color: #333; background: linear-gradient(#d6d6d8, #b7b7ba); margin: 0 -3px; padding: 0 4px 0 2px; border-radius: 3px 3px 0 0; white-space: nowrap; }
.dlgcap { margin-left: 7px; }
.dlgbody { background: #fff; padding: 5px 12px 7px 8px; }
.dlgbody > h2 { margin-top: 7px; }
.dlgbody > .commands { margin-top: 1px; }
.newel { width: 119px; }
.group-c { width: 114px; }
.filter { margin-top: 6px; height: 143px; display: flex; overflow: hidden; }
.filter table { flex: 1; min-width: 0; align-self: flex-start; }
.filter thead tr, .picked thead tr { height: 21px; }
.filter tbody { height: 135px; }
.filter tr td:nth-child(2) { padding-right: 0; }
.filter tr td:nth-child(2) .ic { margin: 0 6px 0 12px; }
.f1 { width: 22px; } .f2 { width: 143px; } .f3 { width: 81px; }
.chk { padding: 0 5px; }
.sel td.chk.on { background: #fbe290; box-shadow: inset 0 0 0 1px #dcb53a; }
.chk input { appearance: none; display: block; width: 11px; height: 11px; border: 1px solid #a8a8a8; border-radius: 2px; background: #fff; }
.vscroll { width: 11px; flex: none; display: flex; flex-direction: column; align-items: center; padding: 6px 0 5px; gap: 6px; }
.vscroll .track { width: 5px; }
.vscroll .thumb { height: 66px; }
.end { justify-content: flex-end; margin-top: 6px; }
.fill { width: 60px; }
.end + h2 { margin-top: 5px; }
.picked { margin-top: 1px; height: 143px; }
.p1 { width: 44px; } .p2 { width: 162px; }
.move { width: 117px; }

.watermark { position: absolute; left: 927px; top: 629px; color: #bcbcbc; pointer-events: none; }
.watermark p { font-family: "Open Sans", "Noto Sans", sans-serif; font-size: 13px; line-height: 16px; }
.watermark small { display: block; font-family: Roboto, sans-serif; font-size: 10px; line-height: 16px; }
.cursor { position: absolute; left: 779px; top: 292px; width: 9px; height: 14px; }

/* taskbar */
.taskbar { height: 28px; flex: none; display: flex; color: #e6e6e6; font-family: Roboto, sans-serif; }
.taskbar button { width: 32px; padding: 0; border: 0; background: none; border-bottom: 2px solid transparent; display: flex; align-items: center; justify-content: center; }
.taskbar .app { width: 33px; }
.taskbar .run { border-bottom-color: #6ea5dd; }
.taskbar .cur { background: #3a3d44; }
.big { width: 15px; height: 15px; }
.tray { margin-left: auto; display: flex; align-items: center; gap: 5px; padding-right: 16px; }
.tray time { text-align: center; font-size: 8px; margin: 0 5px 0 0; }
.people { margin-right: 6px; }
```
